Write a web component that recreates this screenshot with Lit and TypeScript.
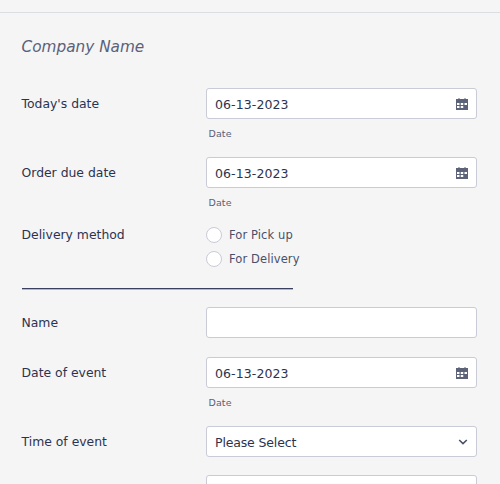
import { LitElement, html, css } from "lit";
import { customElement } from "lit/decorators.js";

const cal = html`<svg class="cal" viewBox="0 0 12 12" width="12" height="12"><path fill="#5c6278" fill-rule="evenodd" d="M2.5 0h1v1h5V0h1v1H12v11H0V1h2.5zM1 5v2h2.5V5zM4.75 5v2h2.5V5zM8.5 5v2H11V5zM1 8v2h2.5V8zM4.75 8v2h2.5V8z"/></svg>`;

@customElement("app-root")
export class AppRoot extends LitElement {
  static styles = css`
    :host { display: block; height: 484px; overflow: hidden; background: #f5f5f6; font-family: "DejaVu Sans", sans-serif; color: #2c3350; }
    .page { border-top: 1px solid #dcdde3; margin-top: 12px; padding: 23px 23px 0 21.5px; }
    h1 { margin: 0 0 30px; font-size: 15.3px; line-height: 22px; font-weight: 400; font-style: italic; color: #5b6179; letter-spacing: 0; }
    .row { display: grid; grid-template-columns: 184.5px 271px; }
    .label { font-size: 12.4px; line-height: 18px; padding-top: 7px; }
    .label.flush { padding-top: 0; }
    .field { display: flex; align-items: center; justify-content: space-between; box-sizing: border-box; height: 31px; padding: 0 8px; background: #fff; border: 1px solid #c9cbd6; border-radius: 3px; font-size: 12.5px; letter-spacing: 0.1px; }
    .field span { padding-top: 2px; }
    .help { font-size: 9.5px; line-height: 14px; color: #5b6179; margin: 8px 0 16px 2.5px; letter-spacing: 0.1px; }
    .cal { display: block; margin-right: 0; }
    .radios { display: flex; flex-direction: column; gap: 6px; }
    .radio { display: flex; align-items: center; gap: 7px; height: 18px; font-size: 11.5px; letter-spacing: 0.1px; color: #4a5069; }
    .dot { width: 14px; height: 14px; border-radius: 50%; background: #fff; border: 1px solid #c9cbd6; }
    .rule { width: 271px; height: 1px; background: #3a4060; box-shadow: 0 1px 0 #b5b8c4; margin: 20px 0 18px; }
    .gap { margin-bottom: 19px; }
    .gap.tight { margin-bottom: 18px; }
    .select { letter-spacing: -0.15px; }
    .chev { display: block; }
  `;

  private dateRow(label: string) {
    return html`<div class="row">
      <div class="label">${label}</div>
      <div>
        <div class="field"><span>06-13-2023</span>${cal}</div>
        <div class="help">Date</div>
      </div>
    </div>`;
  }

  render() {
    return html`<div class="page">
      <h1>Company Name</h1>
      ${this.dateRow("Today's date")}
      ${this.dateRow("Order due date")}
      <div class="row">
        <div class="label flush">Delivery method</div>
        <div class="radios">
          <div class="radio"><span class="dot"></span>For Pick up</div>
          <div class="radio"><span class="dot"></span>For Delivery</div>
        </div>
      </div>
      <div class="rule"></div>
      <div class="row gap">
        <div class="label">Name</div>
        <div class="field"></div>
      </div>
      ${this.dateRow("Date of event")}
      <div class="row gap tight">
        <div class="label">Time of event</div>
        <div class="field select"><span>Please Select</span>
          <svg class="chev" viewBox="0 0 10 6" width="10" height="6"><path d="M1.2 1 5 4.6 8.8 1" fill="none" stroke="#4a5069" stroke-width="1.6"/></svg>
        </div>
      </div>
      <div class="row">
        <div></div>
        <div class="field"></div>
      </div>
    </div>`;
  }
}
